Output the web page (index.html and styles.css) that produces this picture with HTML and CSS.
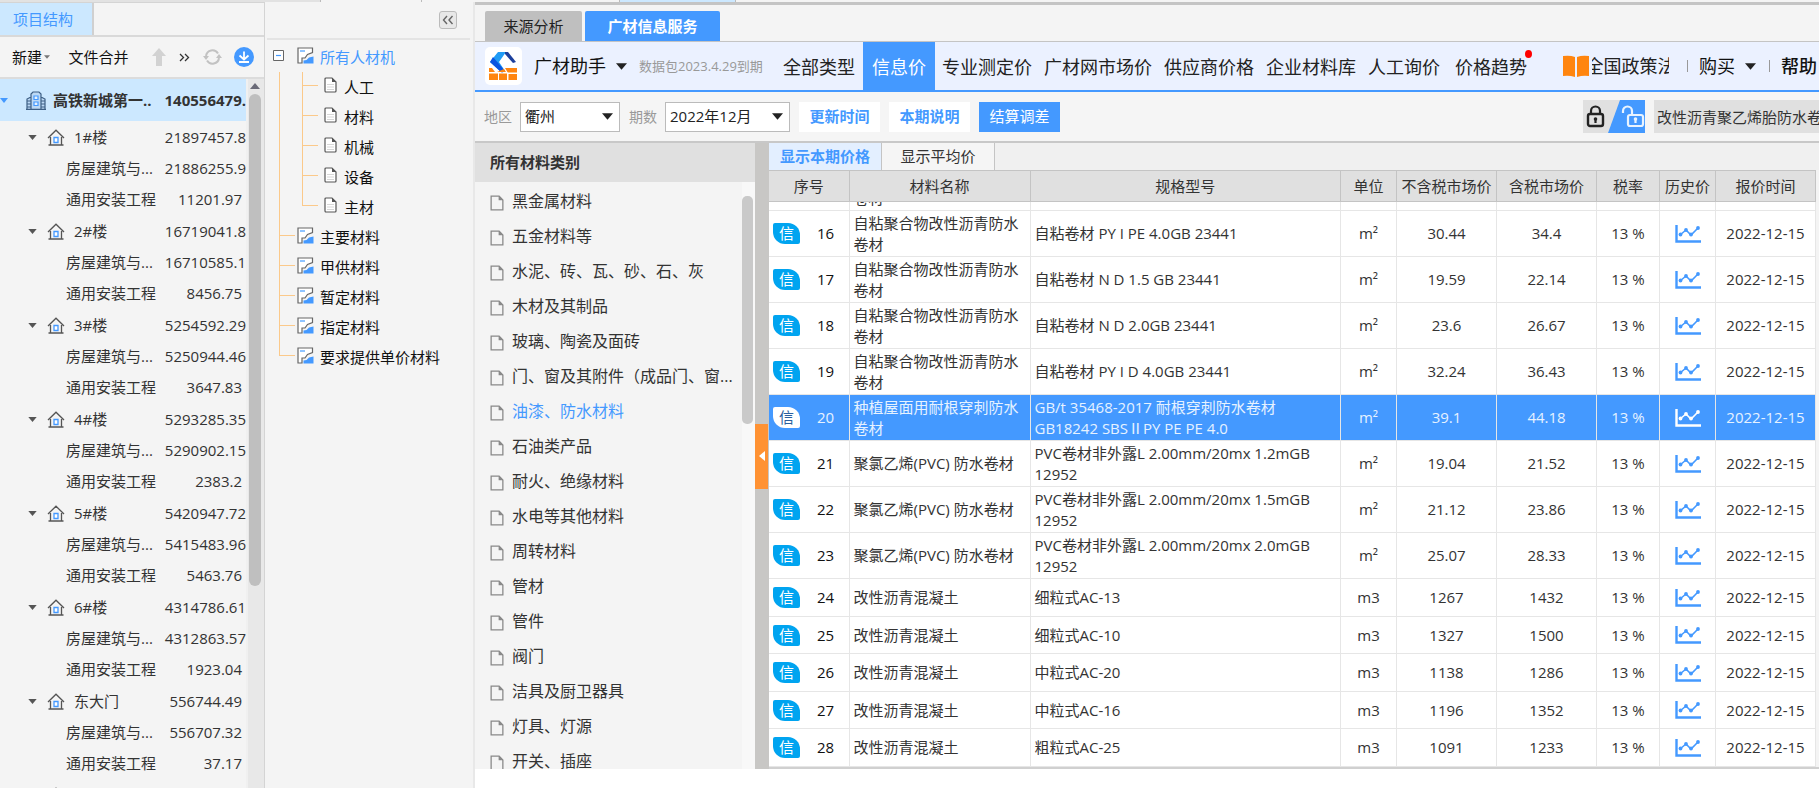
FILE: index.html
```html
<!DOCTYPE html>
<html lang="zh-CN">
<head>
<meta charset="utf-8">
<title>广材信息服务</title>
<link rel="stylesheet" href="styles.css">
</head>
<body>
<svg class="defs" aria-hidden="true">
  <symbol id="house" viewBox="0 0 18 17"><path d="M1 9 9 1.2 17 9M3.5 8v7.5M14.500 8v7.500M1.500 16h15" fill="none" stroke="#555" stroke-width="1.300"/><path d="M7 8.500h4v5H7z" fill="#fff" stroke="#4499ff" stroke-width="1.300"/></symbol>
  <symbol id="page" viewBox="0 0 13 15"><path d="M1 1h7.500L12 4.700V14H1z" fill="none" stroke="#888" stroke-width="1.200"/><path d="M8 1v4h4z" fill="#888"/></symbol>
  <symbol id="doc" viewBox="0 0 13 16"><path d="M2 1h6l4 4v9a1 1 0 0 1-1 1H2a1 1 0 0 1-1-1V2a1 1 0 0 1 1-1z" fill="#fff" stroke="#555" stroke-width="1.200"/><path d="M8 1v4h4z" fill="#555"/><path d="M3 7.500h7M3 10h7M3 12.500h7" stroke="#ccc" stroke-width=".8"/></symbol>
  <symbol id="sheet" viewBox="0 0 17 17"><path d="M1 1h15v5l-4 1-2 2-5 2v5H1z" fill="#fff"/><path d="M15.500 5.500V1H1v15h4v-5h3l2.500-3.500 5-2z" fill="none" stroke="#666" stroke-width="1.200"/><path d="M3 3h5v2H3z" fill="#8fc4ff"/><path d="M6.500 16.500v-3l3-.5 2.500-2.500 4.500-1v7z" fill="#4499ff"/></symbol>
  <symbol id="chart" viewBox="0 0 26 18"><path d="M1.500 0v16.500H26" fill="none" stroke="currentColor" stroke-width="2.400"/><path d="m5 10 6-5 5 5 7-7" fill="none" stroke="currentColor" stroke-width="1.600"/><g fill="currentColor"><circle cx="5.500" cy="9.500" r="1.900"/><circle cx="11" cy="5" r="1.900"/><circle cx="16" cy="9.500" r="1.900"/><circle cx="23" cy="3" r="1.900"/></g></symbol>
  <symbol id="down" viewBox="0 0 10 6"><path d="M0 0h10L5 6z" fill="currentColor"/></symbol>
</svg>
<div class="topstrip"><i></i><i class="pale"></i><i></i><i class="blue"></i><i class="rest"></i></div>
<div class="app">
  <aside class="project">
    <div class="project-tabs"><button class="ptab">项目结构</button></div>
    <div class="toolbar">
      <button class="plain">新建<svg class="mini"><use href="#down"/></svg></button>
      <button class="plain merge">文件合并</button>
      <button class="plain" aria-label="上移"><svg width="16" height="18" viewBox="0 0 16 18"><path d="M8 0l7 8h-4v10H5V8H1z" fill="#d2d2d2"/></svg></button>
      <button class="plain" aria-label="更多"><svg width="11" height="9" viewBox="0 0 11 9"><path d="m1 1 3.500 3.500L1 8M6 1l3.500 3.500L6 8" fill="none" stroke="#333" stroke-width="1.300"/></svg></button>
      <button class="plain" aria-label="刷新"><svg width="19" height="18" viewBox="0 0 19 18"><path d="M3 8a6.500 6.500 0 0 1 12-2.500M16 10a6.500 6.500 0 0 1-12 2.500" fill="none" stroke="#c2c2c2" stroke-width="2"/><path d="M0 8h6l-3 4zM13 10h6l-3-4z" fill="#c2c2c2"/></svg></button>
      <button class="plain" aria-label="下载"><svg width="20" height="20" viewBox="0 0 20 20"><circle cx="10" cy="10" r="10" fill="#4499ff"/><path d="M10 4.500v8M5.500 8.500l4.500 4 4.500-4M5 15h10" fill="none" stroke="#fff" stroke-width="1.800"/></svg></button>
    </div>
    <div class="tree-wrap">
      <div class="ptree">
        <div class="row root"><svg class="caret"><use href="#down"/></svg><svg class="building" width="20" height="19" viewBox="0 0 20 19"><path d="M1 18V8l4-2v12M19 18V8l-4-2v12M5 18V3l2-2h6l2 2v15M0 18.300h20M1.500 10H5M1.500 13H5M1.500 16H5M15 10h3.500M15 13h3.500M15 16h3.500" fill="#bcd9f5" stroke="#3d5f85" stroke-width="1.200"/><path d="M8 5h4v3.500H8zM8 11h4v3.500H8z" fill="#e6f3ff" stroke="#4499ff" stroke-width="1.200"/></svg><span class="name">高铁新城第一..</span><span class="num">140556479.</span></div>
        <div class="row head"><svg class="caret"><use href="#down"/></svg><svg class="house"><use href="#house"/></svg><span class="name">1#楼</span><span class="num">21897457.8</span></div>
        <div class="row"><span class="name">房屋建筑与...</span><span class="num">21886255.9</span></div>
        <div class="row"><span class="name">通用安装工程</span><span class="num pad">11201.97</span></div>
        <div class="row head"><svg class="caret"><use href="#down"/></svg><svg class="house"><use href="#house"/></svg><span class="name">2#楼</span><span class="num">16719041.8</span></div>
        <div class="row"><span class="name">房屋建筑与...</span><span class="num">16710585.1</span></div>
        <div class="row"><span class="name">通用安装工程</span><span class="num pad">8456.75</span></div>
        <div class="row head"><svg class="caret"><use href="#down"/></svg><svg class="house"><use href="#house"/></svg><span class="name">3#楼</span><span class="num">5254592.29</span></div>
        <div class="row"><span class="name">房屋建筑与...</span><span class="num">5250944.46</span></div>
        <div class="row"><span class="name">通用安装工程</span><span class="num pad">3647.83</span></div>
        <div class="row head"><svg class="caret"><use href="#down"/></svg><svg class="house"><use href="#house"/></svg><span class="name">4#楼</span><span class="num">5293285.35</span></div>
        <div class="row"><span class="name">房屋建筑与...</span><span class="num">5290902.15</span></div>
        <div class="row"><span class="name">通用安装工程</span><span class="num pad">2383.2</span></div>
        <div class="row head"><svg class="caret"><use href="#down"/></svg><svg class="house"><use href="#house"/></svg><span class="name">5#楼</span><span class="num">5420947.72</span></div>
        <div class="row"><span class="name">房屋建筑与...</span><span class="num">5415483.96</span></div>
        <div class="row"><span class="name">通用安装工程</span><span class="num pad">5463.76</span></div>
        <div class="row head"><svg class="caret"><use href="#down"/></svg><svg class="house"><use href="#house"/></svg><span class="name">6#楼</span><span class="num">4314786.61</span></div>
        <div class="row"><span class="name">房屋建筑与...</span><span class="num">4312863.57</span></div>
        <div class="row"><span class="name">通用安装工程</span><span class="num pad">1923.04</span></div>
        <div class="row head"><svg class="caret"><use href="#down"/></svg><svg class="house"><use href="#house"/></svg><span class="name">东大门</span><span class="num pad">556744.49</span></div>
        <div class="row"><span class="name">房屋建筑与...</span><span class="num pad">556707.32</span></div>
        <div class="row"><span class="name">通用安装工程</span><span class="num pad">37.17</span></div>
        <div class="row head"><svg class="caret"><use href="#down"/></svg><svg class="house"><use href="#house"/></svg><span class="name">西大门</span></div>
      </div>
      <div class="pscroll"><svg class="up" viewBox="0 0 10 6"><path d="M0 6h10L5 0z" fill="#6b6b78"/></svg><i class="pthumb"></i></div>
    </div>
  </aside>

  <aside class="kinds">
    <div class="kinds-top"><button class="collapse" aria-label="收起"><svg width="12" height="10" viewBox="0 0 12 10"><path d="M5 1 1.500 5 5 9M10.500 1 7 5l3.500 4" fill="none" stroke="#666" stroke-width="1.400"/></svg></button></div>
    <ul class="ktree">
      <li class="open">
        <div class="krow"><svg class="toggle" viewBox="0 0 11 11"><path d="M.5.5h10v10H.5z" fill="#fff" stroke="#666"/><path d="M3 5.500h5" stroke="#4499ff" stroke-width="1.200"/></svg><svg class="sheet"><use href="#sheet"/></svg><span class="active">所有人材机</span></div>
        <ul class="ksub">
          <li><svg class="doc"><use href="#doc"/></svg>人工</li>
          <li><svg class="doc"><use href="#doc"/></svg>材料</li>
          <li><svg class="doc"><use href="#doc"/></svg>机械</li>
          <li><svg class="doc"><use href="#doc"/></svg>设备</li>
          <li><svg class="doc"><use href="#doc"/></svg>主材</li>
        </ul>
      </li>
      <li class="leaf"><svg class="sheet"><use href="#sheet"/></svg>主要材料</li>
      <li class="leaf"><svg class="sheet"><use href="#sheet"/></svg>甲供材料</li>
      <li class="leaf"><svg class="sheet"><use href="#sheet"/></svg>暂定材料</li>
      <li class="leaf"><svg class="sheet"><use href="#sheet"/></svg>指定材料</li>
      <li class="leaf"><svg class="sheet"><use href="#sheet"/></svg>要求提供单价材料</li>
    </ul>
  </aside>

  <main class="main">
    <div class="tabs"><button class="tab">来源分析</button><button class="tab on">广材信息服务</button></div>
    <nav class="nav">
      <span class="logo"><svg width="31" height="30" viewBox="0 0 31 30"><path d="M10 1h8l-7 10 6 9h-5L2 11z" fill="#1f9bf5"/><path d="M2 11l3-5 12 14-3 2z" fill="#0a55e0"/><path d="M17 1h3l8 10-3 1-8-9z" fill="#1b3f9c"/><path d="M1 17h3l3 4H1zM17 17h12v5h-9zM1 22h9v7H1zM11 22h8v7h-8zM20 23h9v6h-9zM9 21h9l-2-3z" fill="#ff850f"/><path d="M0 22h30M10.500 22v7M20 22v7" stroke="#fff"/></svg></span>
      <button class="brand">广材助手<svg class="tri"><use href="#down"/></svg></button>
      <span class="expire">数据包2023.4.29到期</span>
      <div class="links">
        <a href="#">全部类型</a><a href="#" class="on">信息价</a><a href="#">专业测定价</a><a href="#">广材网市场价</a><a href="#">供应商价格</a><a href="#">企业材料库</a><a href="#">人工询价</a><a href="#" class="dot">价格趋势</a>
      </div>
      <a href="#" class="policy"><svg width="26" height="22" viewBox="0 0 26 22"><path d="M0 1q7-1 12 1v20q-6-2-12-1zM14 2q5-2 12-1v20q-6-1-12 1z" fill="#ff850f"/></svg><span class="clip"><span>全国政策法</span></span></a>
      <i class="sep"></i>
      <button class="buy">购买<svg class="tri"><use href="#down"/></svg></button>
      <i class="sep"></i>
      <a href="#" class="help">帮助</a>
    </nav>
    <div class="filters">
      <label for="area">地区</label>
      <span class="pick area"><select id="area"><option>衢州</option></select><svg class="tri"><use href="#down"/></svg></span>
      <label for="term">期数</label>
      <span class="pick term"><select id="term"><option>2022年12月</option></select><svg class="tri"><use href="#down"/></svg></span>
      <button class="btn">更新时间</button>
      <button class="btn">本期说明</button>
      <button class="btn solid">结算调差</button>
      <button class="locks" aria-label="锁定"><svg width="62" height="33" viewBox="0 0 62 33"><path d="M0 0h62v33H0z" fill="#e0e0e0"/><path d="M37 0h25v33H25z" fill="#4499ff"/><rect x="5" y="14" width="15" height="12" rx="2" fill="none" stroke="#222" stroke-width="2.400"/><path d="M8 14v-3a4.500 4.500 0 0 1 9 0v3M12.500 18v5" fill="none" stroke="#222" stroke-width="2.200"/><circle cx="12.500" cy="19" r="1.800" fill="#222"/><rect x="45" y="15" width="15" height="11" rx="2" fill="none" stroke="#e8f3ff" stroke-width="2.200"/><path d="M40 13v-2a4.500 4.500 0 0 1 9 0v4M52.500 18v5" fill="none" stroke="#e8f3ff" stroke-width="2.200"/><circle cx="52.500" cy="19" r="1.800" fill="#e8f3ff"/></svg></button>
      <input class="search" type="text" aria-label="搜索材料" value="改性沥青聚乙烯胎防水卷材">
    </div>
    <div class="body">
      <section class="cats">
        <h2>所有材料类别</h2>
        <div class="cat-wrap">
          <ul>
            <li><svg class="page"><use href="#page"/></svg>黑金属材料</li>
            <li><svg class="page"><use href="#page"/></svg>五金材料等</li>
            <li><svg class="page"><use href="#page"/></svg>水泥、砖、瓦、砂、石、灰</li>
            <li><svg class="page"><use href="#page"/></svg>木材及其制品</li>
            <li><svg class="page"><use href="#page"/></svg>玻璃、陶瓷及面砖</li>
            <li><svg class="page"><use href="#page"/></svg>门、窗及其附件（成品门、窗...</li>
            <li class="active"><svg class="page"><use href="#page"/></svg>油漆、防水材料</li>
            <li><svg class="page"><use href="#page"/></svg>石油类产品</li>
            <li><svg class="page"><use href="#page"/></svg>耐火、绝缘材料</li>
            <li><svg class="page"><use href="#page"/></svg>水电等其他材料</li>
            <li><svg class="page"><use href="#page"/></svg>周转材料</li>
            <li><svg class="page"><use href="#page"/></svg>管材</li>
            <li><svg class="page"><use href="#page"/></svg>管件</li>
            <li><svg class="page"><use href="#page"/></svg>阀门</li>
            <li><svg class="page"><use href="#page"/></svg>洁具及厨卫器具</li>
            <li><svg class="page"><use href="#page"/></svg>灯具、灯源</li>
            <li><svg class="page"><use href="#page"/></svg>开关、插座</li>
          </ul>
          <div class="cscroll"><i></i></div>
        </div>
      </section>
      <div class="splitter"><button aria-label="收起类别"><svg width="6" height="10" viewBox="0 0 6 10"><path d="M6 0v10L0 5z" fill="#fff"/></svg></button></div>
      <section class="prices">
        <div class="ptabs"><button class="on">显示本期价格</button><button>显示平均价</button></div>
        <table class="grid">
          <colgroup><col class="c1"><col class="c2"><col><col class="c4"><col class="c5"><col class="c6"><col class="c7"><col class="c8"><col class="c9"></colgroup>
          <thead><tr><th>序号</th><th>材料名称</th><th>规格型号</th><th>单位</th><th>不含税市场价</th><th>含税市场价</th><th>税率</th><th>历史价</th><th>报价时间</th></tr></thead>
        </table>
        <div class="rows">
        <table class="grid">
          <colgroup><col class="c1"><col class="c2"><col><col class="c4"><col class="c5"><col class="c6"><col class="c7"><col class="c8"><col class="c9"></colgroup>
          <tbody>
            <tr class="tall"><td></td><td>自粘聚合物改性沥青防水卷材</td><td></td><td></td><td></td><td></td><td></td><td></td><td></td></tr>
            <tr class="tall"><td><b>信</b>16</td><td>自粘聚合物改性沥青防水卷材</td><td>自粘卷材 PY I PE 4.0GB 23441</td><td>m²</td><td>30.44</td><td>34.4</td><td>13 %</td><td><svg><use href="#chart"/></svg></td><td>2022-12-15</td></tr>
            <tr class="tall"><td><b>信</b>17</td><td>自粘聚合物改性沥青防水卷材</td><td>自粘卷材 N D 1.5 GB 23441</td><td>m²</td><td>19.59</td><td>22.14</td><td>13 %</td><td><svg><use href="#chart"/></svg></td><td>2022-12-15</td></tr>
            <tr class="tall"><td><b>信</b>18</td><td>自粘聚合物改性沥青防水卷材</td><td>自粘卷材 N D 2.0GB 23441</td><td>m²</td><td>23.6</td><td>26.67</td><td>13 %</td><td><svg><use href="#chart"/></svg></td><td>2022-12-15</td></tr>
            <tr class="tall"><td><b>信</b>19</td><td>自粘聚合物改性沥青防水卷材</td><td>自粘卷材 PY I D 4.0GB 23441</td><td>m²</td><td>32.24</td><td>36.43</td><td>13 %</td><td><svg><use href="#chart"/></svg></td><td>2022-12-15</td></tr>
            <tr class="tall sel"><td><b>信</b>20</td><td>种植屋面用耐根穿刺防水卷材</td><td>GB/t 35468-2017 耐根穿刺防水卷材<br>GB18242 SBSⅡPY PE PE 4.0</td><td>m²</td><td>39.1</td><td>44.18</td><td>13 %</td><td><svg><use href="#chart"/></svg></td><td>2022-12-15</td></tr>
            <tr class="tall"><td><b>信</b>21</td><td>聚氯乙烯(PVC) 防水卷材</td><td>PVC卷材非外露L 2.00mm/20mx 1.2mGB 12952</td><td>m²</td><td>19.04</td><td>21.52</td><td>13 %</td><td><svg><use href="#chart"/></svg></td><td>2022-12-15</td></tr>
            <tr class="tall"><td><b>信</b>22</td><td>聚氯乙烯(PVC) 防水卷材</td><td>PVC卷材非外露L 2.00mm/20mx 1.5mGB 12952</td><td>m²</td><td>21.12</td><td>23.86</td><td>13 %</td><td><svg><use href="#chart"/></svg></td><td>2022-12-15</td></tr>
            <tr class="tall"><td><b>信</b>23</td><td>聚氯乙烯(PVC) 防水卷材</td><td>PVC卷材非外露L 2.00mm/20mx 2.0mGB 12952</td><td>m²</td><td>25.07</td><td>28.33</td><td>13 %</td><td><svg><use href="#chart"/></svg></td><td>2022-12-15</td></tr>
            <tr><td><b>信</b>24</td><td>改性沥青混凝土</td><td>细粒式AC-13</td><td>m3</td><td>1267</td><td>1432</td><td>13 %</td><td><svg><use href="#chart"/></svg></td><td>2022-12-15</td></tr>
            <tr><td><b>信</b>25</td><td>改性沥青混凝土</td><td>细粒式AC-10</td><td>m3</td><td>1327</td><td>1500</td><td>13 %</td><td><svg><use href="#chart"/></svg></td><td>2022-12-15</td></tr>
            <tr><td><b>信</b>26</td><td>改性沥青混凝土</td><td>中粒式AC-20</td><td>m3</td><td>1138</td><td>1286</td><td>13 %</td><td><svg><use href="#chart"/></svg></td><td>2022-12-15</td></tr>
            <tr><td><b>信</b>27</td><td>改性沥青混凝土</td><td>中粒式AC-16</td><td>m3</td><td>1196</td><td>1352</td><td>13 %</td><td><svg><use href="#chart"/></svg></td><td>2022-12-15</td></tr>
            <tr><td><b>信</b>28</td><td>改性沥青混凝土</td><td>粗粒式AC-25</td><td>m3</td><td>1091</td><td>1233</td><td>13 %</td><td><svg><use href="#chart"/></svg></td><td>2022-12-15</td></tr>
          </tbody>
        </table>
        </div>
      </section>
    </div>
  </main>
</div>
</body>
</html>
```
FILE: styles.css
```css
* { box-sizing: border-box; }
html, body { height: 100%; }
body { margin: 0; display: flex; flex-direction: column; overflow: hidden; background: #f4f4f4; color: #333; font: 15px/21px "Open Sans", "Noto Sans CJK SC", sans-serif; }
button, input, select { font: inherit; color: inherit; border: 0; border-radius: 0; background: none; padding: 0; margin: 0; }
a { color: inherit; text-decoration: none; }
ul { list-style: none; margin: 0; padding: 0; }
svg { display: block; flex: none; }
.defs { position: absolute; width: 0; height: 0; }

.topstrip { flex: none; height: 2px; display: flex; gap: 1px; background: #bbb; }
.topstrip i { width: 320px; background: #e2e2e2; }
.topstrip .pale { width: 100px; background: #f4f4f4; }
.topstrip i:nth-child(3) { width: 197px; background: #f4f4f4; }
.topstrip .blue { width: 115px; background: #cce8ff; }
.topstrip .rest { flex: 1; background: #f4f4f4; }
.app { flex: 1; min-height: 0; display: flex; }

/* project structure */
.project { flex: none; width: 265px; display: flex; flex-direction: column; border-right: 1px solid #d4d4d4; border-top: 1px solid #d4d4d4; }
.project-tabs { flex: none; display: flex; height: 34px; border-bottom: 2px solid #d9d9d9; }
.ptab { width: 94px; padding-right: 6px; background: #cce8ff; color: #4499ff; border-right: 2px solid #d0d0d0; }
.toolbar { flex: none; display: flex; align-items: center; height: 42px; padding: 0 10px 0 12px; border-bottom: 2px solid #dcdcdc; justify-content: space-between; color: #111; }
.plain { display: flex; align-items: center; white-space: nowrap; }
.merge { margin-left: 6px; margin-right: 10px; }
.mini { width: 6px; height: 4px; margin-left: 2px; color: #777; }
.tree-wrap { flex: 1; min-height: 0; display: flex; }
.ptree { flex: 1; min-width: 0; overflow: hidden; }
.row { display: flex; align-items: center; height: 31px; padding-left: 66px; white-space: nowrap; overflow: hidden; }
.row .num { margin-left: auto; }
.row .pad { padding-right: 4px; }
.head { height: 32px; padding-left: 28px; }
.caret { width: 9px; height: 5px; color: #555; }
.house { width: 18px; height: 17px; margin: 0 9px 0 10px; }
.root { height: 42px; padding-left: 0; background: #cce8ff; font-weight: bold; }
.root .caret { width: 8px; color: #4499ff; }
.building { margin: 0 7px 0 18px; }
.pscroll { width: 18px; background: #e8e8e8; border-left: 2px solid #f0f0f0; padding: 4px 3px 0 0; display: flex; flex-direction: column; align-items: center; gap: 5px; }
.up { width: 10px; height: 6px; }
.pthumb { width: 12px; height: 492px; border-radius: 6px; background: #bfbfbf; }

/* labour and material kinds */
.kinds { flex: none; width: 210px; border-right: 2px solid #e8e8e8; color: #111; }
.kinds-top { height: 38px; margin: 0 3px 0 2px; padding: 9px 13px 0; border-bottom: 2px solid #e4e4e4; display: flex; justify-content: flex-end; }
.collapse { width: 18px; height: 18px; border: 1px solid #bbb; border-radius: 3px; background: #e8e8e8; display: grid; place-items: center; }
.ktree { padding: 2px 0 0 14px; }
.krow { display: flex; align-items: center; height: 30px; margin-left: -6px; }
.toggle { width: 11px; height: 11px; margin: 0 13px 4px 0; }
.sheet { width: 17px; height: 17px; margin: 0 6px 4px 0; }
.active { color: #4499ff; }
.open { background: linear-gradient(#fbc98a, #fbc98a) no-repeat 0 30px / 1px 100%; }
.ksub { padding-left: 23px; }
.ksub li, .leaf { display: flex; align-items: center; height: 30px; background: linear-gradient(#fbc98a, #fbc98a) no-repeat 0 0 / 1px 100%, linear-gradient(#fbc98a, #fbc98a) no-repeat 0 13px / 16px 1px; }
.ksub li:last-child, .leaf:last-child { background-size: 1px 14px, 16px 1px; }
.ksub li { padding-left: 22px; }
.doc { width: 13px; height: 16px; margin: 0 7px 5px 0; }
.leaf { padding-left: 18px; }

/* service pane */
.main { flex: 1; min-width: 0; display: flex; flex-direction: column; padding-bottom: 19px; background: #fff; border-top: 3px solid #c4c4c4; }
.tabs { flex: none; display: flex; gap: 3px; height: 37px; padding: 6px 0 0 10px; background: #f4f4f4; border-bottom: 1px solid #c4c4c4; }
.tab { width: 97px; background: #bfbfbf; border-radius: 2px 2px 0 0; color: #222; }
.tab.on { width: 135px; background: #4499ff; color: #fff; font-weight: bold; }
.nav { flex: none; display: flex; align-items: center; height: 50px; padding-left: 10px; background: #ebf1ff; border-bottom: 2px solid #4499ff; font-size: 18px; line-height: 24px; white-space: nowrap; color: #222; overflow: hidden; }
.logo { flex: none; width: 37px; height: 38px; border-radius: 5px; background: #fff; display: grid; place-items: center; }
.brand { display: flex; align-items: center; gap: 10px; margin-left: 12px; color: #111; }
.tri { width: 11px; height: 7px; color: #222; }
.expire { margin-left: 12px; width: 121px; font-size: 13px; color: #999; }
.links { display: flex; align-self: stretch; align-items: stretch; margin-left: 17px; }
.links a { display: flex; align-items: center; padding: 2px 6px 0; }
.links .on { padding: 2px 9px 0; margin: 0 1px 0 2px; background: #4499ff; color: #fff; }
.links .dot { position: relative; margin-left: 3px; }
.dot::after { content: ""; position: absolute; top: 8px; right: 1px; width: 7px; height: 8px; border-radius: 50%; background: #f00; }
.policy { display: flex; align-items: center; margin-left: auto; gap: 3px; }
.clip { width: 77px; overflow: hidden; display: flex; justify-content: center; }
.sep { width: 1px; height: 12px; background: #999; margin: 0 11px 0 18px; }
.buy { display: flex; align-items: center; gap: 10px; color: #111; }
.buy + .sep { margin-left: 13px; }
.help { color: #111; font-weight: 500; padding-right: 2px; }

.filters { flex: none; display: flex; align-items: center; height: 51px; padding-left: 9px; background: #f5f5f5; border-bottom: 2px solid #c8c8c8; white-space: nowrap; }
.filters label { font-size: 14px; color: #999; }
.pick { display: grid; align-items: center; height: 30px; margin: 0 9px 0 8px; background: #fff; border: 1px solid #bbb; }
.pick select, .pick svg { grid-area: 1 / 1; }
.pick svg { justify-self: end; margin-right: 6px; pointer-events: none; }
.pick select { appearance: none; height: 28px; padding-left: 4px; color: #222; }
.area { width: 100px; }
.term { width: 125px; }
.btn { width: 81px; height: 30px; margin-right: 9px; background: #fff; color: #4499ff; font-weight: bold; }
.btn.solid { background: #4499ff; color: #fff; font-weight: normal; }
.locks { margin-left: auto; }
.search { width: 165px; height: 33px; margin-left: 9px; padding-left: 3px; background: #e0e0e0; }

.body { flex: 1; min-height: 0; display: flex; }
.cats { flex: none; width: 280px; display: flex; flex-direction: column; background: #f4f4f4; }
.cats h2 { margin: 0; flex: none; height: 39px; padding: 9px 15px; background: #e0e0e0; font-size: 15px; line-height: 21px; color: #333; }
.cat-wrap { flex: 1; min-height: 0; display: flex; overflow: hidden; }
.cat-wrap ul { flex: 1; min-width: 0; padding: 2px 0 0 15px; font-size: 16px; white-space: nowrap; }
.cat-wrap li { display: flex; align-items: center; height: 35px; }
.page { width: 14px; height: 16px; margin: 2px 8px 0 0; }
.cscroll { width: 13px; padding-top: 14px; background: #f8f8f8; }
.cscroll i { display: block; width: 11px; height: 228px; border-radius: 5px; background: #c9c9c9; }
.splitter { flex: none; width: 14px; display: flex; align-items: center; background: #c8c7c5; }
.splitter button { width: 13px; height: 65px; background: #ff9233; display: grid; place-items: center; }
.prices { flex: 1; min-width: 0; display: flex; flex-direction: column; background: #f4f4f4; border-bottom: 2px solid #d0d0d0; }
.ptabs { flex: none; display: flex; height: 27px; background: #f0f0f0; }
.ptabs button { width: 113px; background: #f5f5f5; border-right: 1px solid #c4c4c4; }
.ptabs .on { background: #e3efff; color: #4499ff; font-weight: bold; }
.grid { flex: none; width: calc(100% - 3px); table-layout: fixed; border-collapse: collapse; background: #fff; }
.c1 { width: 80px; } .c2 { width: 181px; } .c4 { width: 56px; } .c5, .c6 { width: 100px; } .c7 { width: 63px; } .c8 { width: 56px; } .c9 { width: 100px; }
.grid th { height: 31px; padding: 0; background: #e0e0e0; border: 1px solid #c4c4c4; border-left-width: 0; font-weight: normal; white-space: nowrap; color: #333; }
.rows { flex: 1; min-height: 0; overflow: hidden; display: flex; flex-direction: column; justify-content: flex-end; }
.grid td { height: 38px; padding: 0; border: 1px solid #e6e6e6; border-left-width: 0; text-align: center; }
.grid tr:nth-child(odd) td { height: 37px; }
.grid .tall td, .grid .tall:nth-child(odd) td { height: 46px; }
.grid td:first-child { text-align: left; padding-left: 4px; color: #111; }
.grid td:nth-child(2), .grid td:nth-child(3) { text-align: left; padding: 0 4px; }
.grid td svg { width: 26px; height: 18px; margin: 0 auto; color: #4499ff; }
.grid b { display: inline-block; width: 27px; height: 21px; margin-right: 17px; border-radius: 2px 12px 2px 12px; background: #00a4f0; color: #fff; font-weight: normal; text-align: center; }
.grid .sel td { background: #4499ff; color: #e6f2ff; }
.grid .sel svg { color: #fff; }
.grid .sel b { background: #fff; color: #2a5f9e; }
```
